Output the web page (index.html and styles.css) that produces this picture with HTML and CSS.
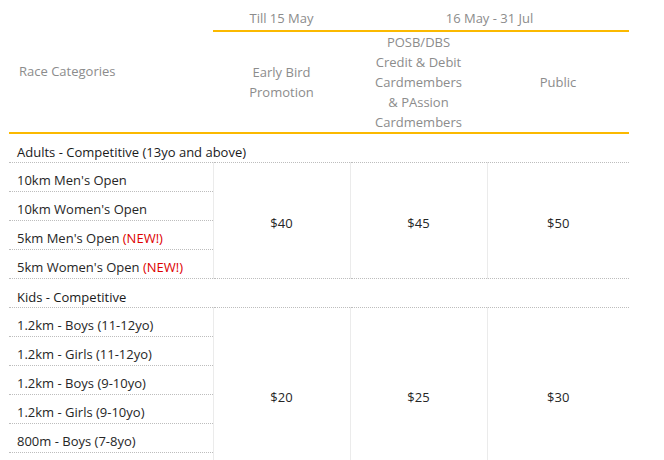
FILE: index.html
```html
<!DOCTYPE html>
<html>
<head>
<meta charset="utf-8">
<link rel="stylesheet" href="styles.css">
</head>
<body>
<table class="fees">
  <colgroup>
    <col class="c-cat">
    <col class="c-price">
    <col class="c-price">
    <col class="c-public">
  </colgroup>
  <thead>
    <tr class="period-row">
      <th class="h-cat" rowspan="2">Race Categories</th>
      <th class="h-period">Till 15 May</th>
      <th class="h-period" colspan="2">16 May - 31 Jul</th>
    </tr>
    <tr class="tier-row">
      <th class="h-tier">Early Bird<br>Promotion</th>
      <th class="h-tier">POSB/DBS<br>Credit &amp; Debit<br>Cardmembers<br>&amp; PAssion<br>Cardmembers</th>
      <th class="h-tier">Public</th>
    </tr>
  </thead>
  <tbody>
    <tr class="group-row"><td colspan="4">Adults - Competitive (13yo and above)</td></tr>
    <tr>
      <td class="cat">10km Men's Open</td>
      <td class="price" rowspan="4">$40</td>
      <td class="price" rowspan="4">$45</td>
      <td class="price last" rowspan="4">$50</td>
    </tr>
    <tr><td class="cat">10km Women's Open</td></tr>
    <tr><td class="cat">5km Men's Open <span class="new">(NEW!)</span></td></tr>
    <tr><td class="cat">5km Women's Open <span class="new">(NEW!)</span></td></tr>
    <tr class="group-row"><td colspan="4">Kids - Competitive</td></tr>
    <tr>
      <td class="cat">1.2km - Boys (11-12yo)</td>
      <td class="price" rowspan="6">$20</td>
      <td class="price" rowspan="6">$25</td>
      <td class="price last" rowspan="6">$30</td>
    </tr>
    <tr><td class="cat">1.2km - Girls (11-12yo)</td></tr>
    <tr><td class="cat">1.2km - Boys (9-10yo)</td></tr>
    <tr><td class="cat">1.2km - Girls (9-10yo)</td></tr>
    <tr><td class="cat">800m - Boys (7-8yo)</td></tr>
    <tr><td class="cat">800m - Girls (7-8yo)</td></tr>
  </tbody>
</table>
</body>
</html>
```

FILE: styles.css
```css
html, body {
  margin: 0;
  padding: 0;
  background: #ffffff;
}

body {
  padding: 0 0 0 9px;
  font-family: "Open Sans", "Noto Sans", sans-serif;
  font-size: 13px;
  line-height: 20px;
  color: #262626;
}

.fees {
  width: 620px;
  table-layout: fixed;
  border-collapse: collapse;
  border-spacing: 0;
}

.c-cat { width: 204px; }
.c-price { width: 137px; }
.c-public { width: 142px; }

.fees th {
  font-weight: normal;
  color: #8c8c8c;
  padding: 0;
}

.h-cat {
  text-align: left;
  vertical-align: middle;
  padding: 10px 0 0 10px !important;
  border-bottom: 2px solid #fbb900;
}

.h-period {
  text-align: center;
  padding: 8px 0 2px 0 !important;
  border-bottom: 2px solid #fbb900;
}

.h-tier {
  text-align: center;
  vertical-align: middle;
  border-bottom: 2px solid #fbb900;
}

.fees td {
  padding: 0;
}

.group-row td {
  padding: 8px 8px 0 8px;
  color: #1a1a1a;
  border-bottom: 1px dotted #bdbdbd;
}

.cat {
  padding: 7px 8px 1px 8px !important;
  border-bottom: 1px dotted #bdbdbd;
  border-right: 1px solid #ebebeb;
  white-space: nowrap;
}

.price {
  text-align: center;
  vertical-align: middle;
  padding-top: 4px !important;
  border-bottom: 1px dotted #bdbdbd;
  border-right: 1px solid #ebebeb;
}

.price.last {
  border-right: none;
}

.new {
  color: #dd0000;
}
```
